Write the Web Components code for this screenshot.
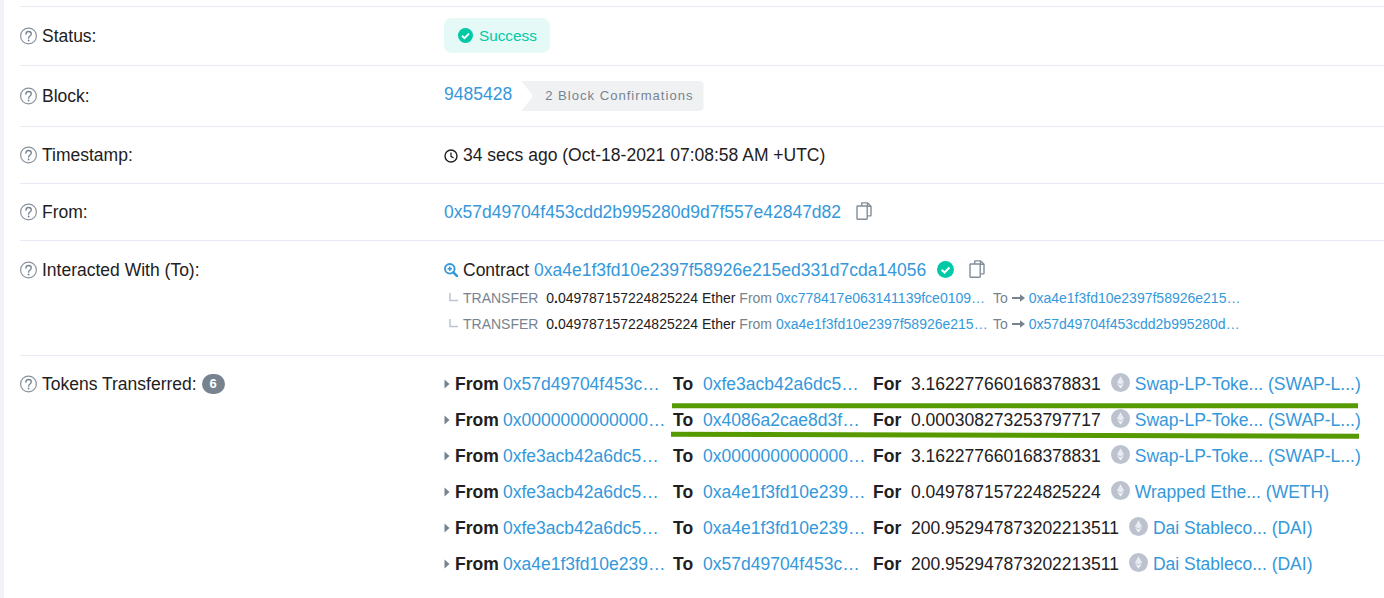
<!DOCTYPE html>
<html><head><meta charset="utf-8">
<style>
html,body{margin:0;padding:0;background:#fff;height:598px;overflow:hidden}
body{font:17.5px/24px "Liberation Sans",Arial,sans-serif;color:#1e2022}
a{color:#3498db;text-decoration:none}
</style></head><body>
<template id="t-sheet"><style>
:host{display:block;height:598px;position:relative;border-left:4px solid #f0f2f7;box-sizing:border-box;padding:6px 0 0 16px;overflow:hidden;background:#fff}
</style><slot></slot></template>

<template id="t-row"><style>
:host{display:grid;grid-template-columns:424px 1fr;border-top:1px solid #e7eaf3;box-sizing:border-box;height:var(--h,58px);padding-top:var(--pt,16px)}
.label{display:flex;gap:4px;height:24px;align-items:center;color:#1e2022}
</style><div class="label"><tx-help></tx-help><slot name="label"></slot></div><div class="value"><slot></slot></div></template>

<script>
const link='color:#3498db;text-decoration:none';
function sh(el,tid){const s=el.attachShadow({mode:'open'});if(tid)s.appendChild(document.getElementById(tid).content.cloneNode(true));return s}
class TxSheet extends HTMLElement{constructor(){super();sh(this,'t-sheet')}}
class TxRow extends HTMLElement{constructor(){super();sh(this,'t-row')}}
class TxHelp extends HTMLElement{constructor(){super();sh(this).innerHTML=`<style>:host{display:inline-flex;width:18px;height:18px;flex:none}svg{display:block}</style><svg width="18" height="18" viewBox="0 0 18 18" fill="none"><circle cx="8.500" cy="9" r="7.900" stroke="#8a939c" stroke-width="1.200"/><path d="M5.900 7.200C5.900 5.500 7.100 4.500 8.600 4.500s2.700.9 2.700 2.500c0 2-2.700 2.100-2.700 4.200" stroke="#77838f" stroke-width="1.300" stroke-linecap="round"/><circle cx="8.600" cy="13.500" r=".9" fill="#77838f"/></svg>`}}
class TxStatus extends HTMLElement{constructor(){super();sh(this).innerHTML=`<style>:host{display:inline-flex;align-items:center;gap:6px;height:35px;box-sizing:border-box;padding:0 13px 0 14px;background:#e5f9f6;border-radius:8px;color:#00c9a7;font-size:15.300px;margin-top:-6px}</style><svg width="15" height="15" viewBox="0 0 15 15"><circle cx="7.500" cy="7.500" r="7.500" fill="#00c9a7"/><path d="M4 7.700l2.500 2.500L11 5.600" fill="none" stroke="#fff" stroke-width="2"/></svg><slot></slot>`}}
class TxBadge extends HTMLElement{constructor(){super();sh(this).innerHTML=`<style>:host{display:inline-flex;align-items:center;height:30px;box-sizing:border-box;padding:0 10px 0 24px;background:#f0f1f3;color:#77838f;font-size:13.100px;letter-spacing:1px;clip-path:polygon(0 0,100% 0,100% 100%,0 100%,12px 50%);border-radius:0 5px 5px 0;margin:4px 0 0 9px}</style><slot></slot>`}}
class TxCopy extends HTMLElement{constructor(){super();sh(this).innerHTML=`<style>:host{display:inline-flex;flex:none;margin:var(--mt,-2px) 0 0 var(--ml,15px)}svg{display:block}</style><svg width="16" height="18" viewBox="0 0 16 18" fill="none" stroke="#828d98" stroke-width="1.400"><path d="M5.700 3.700V1.500c0-.3.2-.6.6-.6h5.200l3.500 3.500v8.900c0 .3-.3.6-.6.6h-2.600"/><path d="M11.500 .9v3.500h3.500"/><rect x="1" y="4" width="10.200" height="13.200" rx=".7"/></svg>`}}
class TxClock extends HTMLElement{constructor(){super();sh(this).innerHTML=`<style>:host{display:inline-flex;vertical-align:-2px;margin-right:5px}svg{display:block}</style><svg width="14" height="14" viewBox="0 0 14 14" fill="none" stroke="#1e2022" stroke-width="1.400"><circle cx="7" cy="7" r="6"/><path d="M7 3.400V7.400l2.600 1.600" stroke-width="1.300"/></svg>`}}
class TxZoom extends HTMLElement{constructor(){super();sh(this).innerHTML=`<style>:host{display:inline-flex;vertical-align:-2px;margin-right:5px}svg{display:block}</style><svg width="14" height="14" viewBox="0 0 14 14" fill="none" stroke="#3498db"><circle cx="5.800" cy="5.800" r="4.800" stroke-width="1.900"/><path d="M9.300 9.300l3.800 3.800" stroke-width="2.600" stroke-linecap="round"/><path d="M3.600 5.800h4.400M5.800 3.600V8" stroke-width="1.500"/></svg>`}}
class TxVerified extends HTMLElement{constructor(){super();sh(this).innerHTML=`<style>:host{display:inline-flex;margin:-1px 0 0 11px}svg{display:block}</style><svg width="17" height="17" viewBox="0 0 17 17"><circle cx="8.500" cy="8.500" r="8.500" fill="#00c9a7"/><path d="M4.600 8.700l2.900 2.800 5-5" fill="none" stroke="#fff" stroke-width="2.100"/></svg>`}}
class TxTransfer extends HTMLElement{connectedCallback(){sh(this).innerHTML=`<style>
:host{display:flex;align-items:center;height:26px;font-size:14px;white-space:nowrap;color:#1e2022;padding-left:5px}
.m{color:#77838f}a{${link}}
svg{display:block;flex:none}
.arrow{margin:0 4px 0 4px}
.from{display:inline-block;width:217px}
</style><svg width="10" height="10" viewBox="0 0 10 10" style="margin-right:4px"><path d="M1 0v7.500h8" fill="none" stroke="#bcc3cf" stroke-width="1.500"/></svg><span class="m">TRANSFER</span>&nbsp;&nbsp;<span id="amt"></span>&nbsp;Ether&nbsp;<span class="m">From</span>&nbsp;<a id="f" href="#" class="from"></a><span class="m">To</span><svg class="arrow" width="13" height="8" viewBox="0 0 13 8"><path d="M0 4h10" stroke="#77838f" stroke-width="2"/><path d="M8 0.300L13 4 8 7.700z" fill="#77838f"/></svg><a id="t" href="#"></a>`;
const s=this.shadowRoot;const [i,d]=this.getAttribute('amount').split('.');const am=s.getElementById('amt');am.innerHTML=`${i}<b>.</b>${d}`;s.getElementById('f').textContent=this.getAttribute('from');s.getElementById('t').textContent=this.getAttribute('to')}}
class TxEth extends HTMLElement{constructor(){super();sh(this).innerHTML=`<style>:host{display:inline-flex;flex:none}svg{display:block}</style><svg width="19" height="19" viewBox="0 0 18 18"><circle cx="9" cy="9" r="9" fill="#bcc3cf"/><path d="M9 3L5.600 9 9 11.100 12.400 9z" fill="#e8ebf0"/><path d="M5.600 10L9 14.800 12.400 10 9 12.100z" fill="#f7f8fa"/></svg>`}}
class TxToken extends HTMLElement{connectedCallback(){const a=n=>this.getAttribute(n);sh(this).innerHTML=`<style>
:host{display:grid;grid-template-columns:11px 218px 200px 1fr;height:36px;align-items:center;white-space:nowrap;color:#1e2022}
a{${link}}b{font-weight:700}
.c{display:flex;align-items:center}
.f b{width:48px;flex:none}.t b{width:30px;flex:none}.v b{width:38px;flex:none}
.v tx-eth{margin:-3px 5px 0 10px}
svg{display:block}
</style><svg width="6" height="10" viewBox="0 0 6 10"><path d="M.5 .5L5.500 5 .5 9.500z" fill="#77838f"/></svg>
<div class="c f"><b>From</b><a href="#">${a('from')}</a></div>
<div class="c t"><b>To</b><a href="#">${a('to')}</a></div>
<div class="c v"><b>For</b><span>${a('for')}</span><tx-eth></tx-eth><a href="#">${a('token')}</a></div>`}}
class TxMarks extends HTMLElement{constructor(){super();sh(this).innerHTML=`<style>:host{position:absolute;left:0;top:0;pointer-events:none}svg{display:block}</style><svg width="1384" height="598" style="margin-left:-4px"><path d="M672 405.800L1358 405.800" stroke="#579a00" stroke-width="5"/><path d="M671 434.200L1359 436.200" stroke="#579a00" stroke-width="5"/></svg>`}}
class TxCount extends HTMLElement{constructor(){super();sh(this).innerHTML=`<style>:host{display:inline-flex;align-items:center;justify-content:center;width:23px;height:20px;border-radius:10px;background:#77838f;color:#fff;font-size:13px;font-weight:700}</style><slot></slot>`}}
for(const [n,c] of Object.entries({'tx-sheet':TxSheet,'tx-row':TxRow,'tx-help':TxHelp,'tx-status':TxStatus,'tx-badge':TxBadge,'tx-copy':TxCopy,'tx-clock':TxClock,'tx-zoom':TxZoom,'tx-verified':TxVerified,'tx-transfer':TxTransfer,'tx-eth':TxEth,'tx-token':TxToken,'tx-marks':TxMarks,'tx-count':TxCount}))customElements.define(n,c);
</script>

<tx-sheet>
<tx-row style="--h:59px;--pt:17px"><span slot="label">Status:</span><tx-status>Success</tx-status></tx-row>
<tx-row style="--h:61px;--pt:18px"><span slot="label">Block:</span><div style="display:flex;align-items:center;height:24px;margin-top:-2px"><a href="#">9485428</a><tx-badge>2 Block Confirmations</tx-badge></div></tx-row>
<tx-row style="--h:57px;--pt:16px"><span slot="label">Timestamp:</span><div><tx-clock></tx-clock>34 secs ago (Oct-18-2021 07:08:58 AM +UTC)</div></tx-row>
<tx-row style="--h:57px;--pt:16px"><span slot="label">From:</span><div style="display:flex;align-items:center"><a href="#">0x57d49704f453cdd2b995280d9d7f557e42847d82</a><tx-copy></tx-copy></div></tx-row>
<tx-row style="--h:115px;--pt:17px"><span slot="label">Interacted With (To):</span><div>
<div style="display:flex;align-items:center;height:24px"><tx-zoom></tx-zoom><span>Contract&nbsp;</span><a href="#">0xa4e1f3fd10e2397f58926e215ed331d7cda14056</a><tx-verified></tx-verified><tx-copy></tx-copy></div>
<div style="height:3px"></div>
<tx-transfer amount="0.049787157224825224" from="0xc778417e063141139fce0109…" to="0xa4e1f3fd10e2397f58926e215…"></tx-transfer>
<tx-transfer amount="0.049787157224825224" from="0xa4e1f3fd10e2397f58926e215…" to="0x57d49704f453cdd2b995280d…"></tx-transfer>
</div></tx-row>
<tx-row style="--h:242px;--pt:16px"><span slot="label" style="display:inline-flex;align-items:center;gap:5px;height:24px">Tokens Transferred: <tx-count>6</tx-count></span><div style="margin-top:-6px">
<tx-token from="0x57d49704f453c…" to="0xfe3acb42a6dc5…" for="3.162277660168378831" token="Swap-LP-Toke... (SWAP-L...)"></tx-token>
<tx-token from="0x0000000000000…" to="0x4086a2cae8d3f…" for="0.000308273253797717" token="Swap-LP-Toke... (SWAP-L...)"></tx-token>
<tx-token from="0xfe3acb42a6dc5…" to="0x0000000000000…" for="3.162277660168378831" token="Swap-LP-Toke... (SWAP-L...)"></tx-token>
<tx-token from="0xfe3acb42a6dc5…" to="0xa4e1f3fd10e239…" for="0.049787157224825224" token="Wrapped Ethe... (WETH)"></tx-token>
<tx-token from="0xfe3acb42a6dc5…" to="0xa4e1f3fd10e239…" for="200.952947873202213511" token="Dai Stableco... (DAI)"></tx-token>
<tx-token from="0xa4e1f3fd10e239…" to="0x57d49704f453c…" for="200.952947873202213511" token="Dai Stableco... (DAI)"></tx-token>
</div></tx-row>
<tx-marks></tx-marks>
</tx-sheet>
</body></html>
